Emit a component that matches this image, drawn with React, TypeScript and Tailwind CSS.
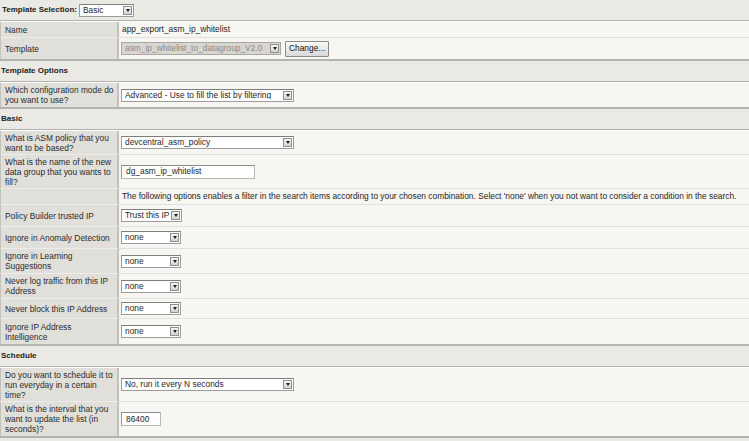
import React from "react";

function Arrow() {
  return (
    <span className="ml-auto flex h-[9px] w-[9px] shrink-0 items-center justify-center border border-[#8f8f8f] bg-gradient-to-b from-[#f6f6f6] to-[#d2d2d2]">
      <span className="h-0 w-0 border-x-[2.5px] border-t-[3px] border-x-transparent border-t-[#1e1e1e]" />
    </span>
  );
}

function Select({
  value,
  className,
  disabled = false,
}: {
  value: string;
  className: string;
  disabled?: boolean;
}) {
  return (
    <div
      className={`flex h-[13px] shrink-0 items-center border pr-[1px] pl-[3px] leading-none ${
        disabled
          ? "border-[#a9a7a3] bg-[#d8d6d1] text-[#8b8985]"
          : "border-[#9c9c9c] border-t-[#7e7e7e] bg-white text-[#1f1f1f]"
      } ${className}`}
    >
      <span className="overflow-hidden pr-[1px] whitespace-nowrap">{value}</span>
      <Arrow />
    </div>
  );
}

function Input({ value, className }: { value: string; className: string }) {
  return (
    <div
      className={`flex h-[14px] items-center border border-[#b8b8b8] border-t-[#8a8a8a] border-l-[#9a9a9a] bg-white pl-[4px] leading-none text-[#1f1f1f] ${className}`}
    >
      {value}
    </div>
  );
}

function Header({ children }: { children: React.ReactNode }) {
  return (
    <div className="flex h-[21px] items-center border-b border-[#b3b1ad] bg-[#ebe9e4] pl-[1px] text-[8px] font-bold text-[#1c1c1c]">
      {children}
    </div>
  );
}

type RowDef = {
  label: React.ReactNode;
  h: string;
  value: React.ReactNode;
  last?: boolean;
};

function Row({ label, h, value, last }: RowDef) {
  return (
    <div className={`grid grid-cols-[119px_1fr] ${h}`}>
      <div
        className={`flex items-center overflow-hidden border-r-2 border-l border-r-[#c3c1bc] border-l-[#c3c1bc] bg-[#e1dfda] pl-[4px] leading-[10px] whitespace-nowrap text-[#2b2b2b] ${
          last ? "" : "border-b border-b-[#eeece8]"
        }`}
      >
        <span>{label}</span>
      </div>
      <div
        className={`flex items-center bg-[#f7f6f3] pl-[2px] text-[#1f1f1f] ${
          last ? "" : "border-b border-b-[#e3e1dd]"
        }`}
      >
        {value}
      </div>
    </div>
  );
}

function Section({ rows }: { rows: RowDef[] }) {
  return (
    <div className="border-t border-b-2 border-t-white border-b-[#b5b3af]">
      {rows.map((r, i) => (
        <Row key={i} {...r} last={i === rows.length - 1} />
      ))}
    </div>
  );
}

const none = <Select value="none" className="w-[60px]" />;

export default function App() {
  return (
    <div className="min-h-screen w-[749px] bg-[#ebe9e4] font-['Liberation_Sans',Arial,sans-serif] text-[8.4px]">
      <div className="flex h-[21px] items-center border-b border-[#b3b1ad] bg-[#ebe9e4] pl-[2px]">
        <span className="w-[77px] shrink-0 text-[8px] font-bold whitespace-nowrap text-[#1c1c1c]">
          Template Selection:
        </span>
        <Select value="Basic" className="w-[55px]" />
      </div>
      <Section
        rows={[
          {
            label: "Name",
            h: "h-[16px]",
            value: <span className="pl-[1px]">app_export_asm_ip_whitelist</span>,
          },
          {
            label: "Template",
            h: "h-[21px]",
            value: (
              <div className="flex items-center gap-[4px]">
                <Select
                  value="asm_ip_whitelist_to_datagroup_V2.0"
                  className="w-[160px]"
                  disabled
                />
                <button className="h-[16px] rounded-[1px] border border-[#8a8a8a] bg-gradient-to-b from-[#fbfbfb] to-[#d9d9d9] px-[3px] leading-none text-[#111]">
                  Change...
                </button>
              </div>
            ),
          },
        ]}
      />
      <Header>Template Options</Header>
      <Section
        rows={[
          {
            label: (
              <>
                Which configuration mode do
                <br />
                you want to use?
              </>
            ),
            h: "h-[24px]",
            value: (
              <Select
                value="Advanced - Use to fill the list by filtering"
                className="w-[173px]"
              />
            ),
          },
        ]}
      />
      <Header>Basic</Header>
      <Section
        rows={[
          {
            label: (
              <>
                What is ASM policy that you
                <br />
                want to be based?
              </>
            ),
            h: "h-[24px]",
            value: <Select value="devcentral_asm_policy" className="w-[173px]" />,
          },
          {
            label: (
              <>
                What is the name of the new
                <br />
                data group that you wants to
                <br />
                fill?
              </>
            ),
            h: "h-[34px]",
            value: <Input value="dg_asm_ip_whitelist" className="w-[134px]" />,
          },
          {
            label: "",
            h: "h-[16px]",
            value: (
              <span className="pl-[1px] whitespace-nowrap">
                The following options enables a filter in the search items according to
                your chosen combination. Select 'none' when you not want to consider a
                condition in the search.
              </span>
            ),
          },
          {
            label: "Policy Builder trusted IP",
            h: "h-[22px]",
            value: <Select value="Trust this IP" className="w-[61px]" />,
          },
          {
            label: "Ignore in Anomaly Detection",
            h: "h-[22px]",
            value: none,
          },
          {
            label: (
              <>
                Ignore in Learning
                <br />
                Suggestions
              </>
            ),
            h: "h-[25px]",
            value: none,
          },
          {
            label: (
              <>
                Never log traffic from this IP
                <br />
                Address
              </>
            ),
            h: "h-[25px]",
            value: none,
          },
          {
            label: "Never block this IP Address",
            h: "h-[20px]",
            value: none,
          },
          {
            label: (
              <>
                Ignore IP Address
                <br />
                Intelligence
              </>
            ),
            h: "h-[25px]",
            value: none,
          },
        ]}
      />
      <Header>Schedule</Header>
      <Section
        rows={[
          {
            label: (
              <>
                Do you want to schedule it to
                <br />
                run everyday in a certain
                <br />
                time?
              </>
            ),
            h: "h-[34px]",
            value: (
              <Select value="No, run it every N seconds" className="w-[173px]" />
            ),
          },
          {
            label: (
              <>
                What is the interval that you
                <br />
                want to update the list (in
                <br />
                seconds)?
              </>
            ),
            h: "h-[34px]",
            value: <Input value="86400" className="w-[40px]" />,
          },
        ]}
      />
    </div>
  );
}
